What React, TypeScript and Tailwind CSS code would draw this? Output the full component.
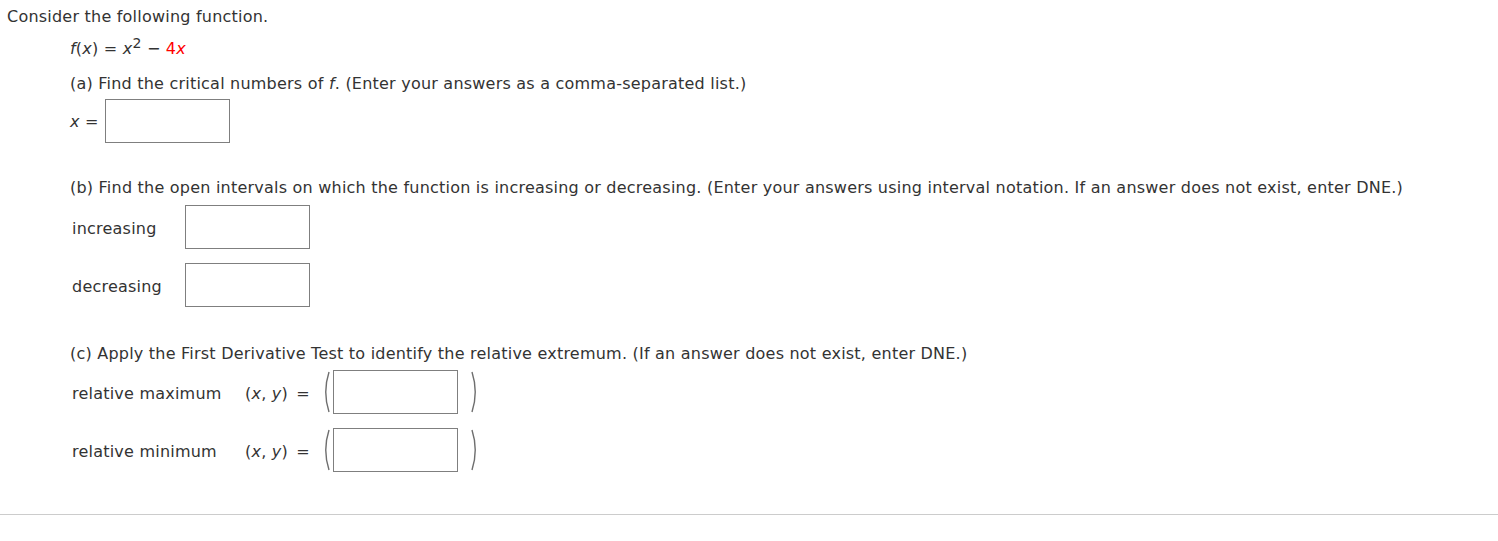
import React from "react";

const Box = ({ w = "w-[125px]" }: { w?: string }) => (
  <div className={`${w} h-[44px] border border-[#7f7f7f] bg-white shrink-0`} />
);

const Paren = ({ right = false }: { right?: boolean }) => (
  <svg width="10" height="44" viewBox="0 0 10 44" className="shrink-0">
    <path
      d={right ? "M2 2 Q8.5 22 2 42" : "M8 2 Q1.5 22 8 42"}
      fill="none"
      stroke="#6e6e6e"
      strokeWidth="1.4"
    />
  </svg>
);

export default function App() {
  return (
    <div
      className="w-[1498px] h-[541px] bg-white text-[#333333] text-[16px] tracking-[0.22px]"
      style={{ fontFamily: '"DejaVu Sans", Verdana, sans-serif' }}
    >
      <div className="pt-[7px]">
        <div className="pl-[7px] h-[20px] leading-[20px]">Consider the following function.</div>
        <div className="ml-[70px]">
          <div className="mt-[12px] h-[20px] leading-[20px]">
            <i>f</i>(<i>x</i>) = <i>x</i>
            <sup className="text-[14px] top-[-0.4em]">2</sup> − <span className="text-[#ff0000]">4<i>x</i></span>
          </div>
          <div className="mt-[15px] h-[20px] leading-[20px]">
            (a) Find the critical numbers of <i>f</i>. (Enter your answers as a comma-separated list.)
          </div>
          <div className="mt-[5px] flex items-center">
            <span className="w-[35px] pt-[2px]">
              <i>x</i> =
            </span>
            <Box />
          </div>
          <div className="mt-[35px] h-[20px] leading-[20px]">
            (b) Find the open intervals on which the function is increasing or decreasing. (Enter your answers using interval notation. If an answer does not exist, enter DNE.)
          </div>
          <div className="mt-[7px] flex items-center">
            <span className="pl-[2px] w-[115px] pt-[3px]">increasing</span>
            <Box />
          </div>
          <div className="mt-[14px] flex items-center">
            <span className="pl-[2px] w-[115px] pt-[3px]">decreasing</span>
            <Box />
          </div>
          <div className="mt-[37px] h-[20px] leading-[20px]">
            (c) Apply the First Derivative Test to identify the relative extremum. (If an answer does not exist, enter DNE.)
          </div>
          <div className="mt-[6px] flex items-center">
            <span className="pl-[2px] w-[175px] pt-[3px]">relative maximum</span>
            <span className="w-[76px] pt-[3px]">
              (<i>x</i>, <i>y</i>) <span className="pl-[3px]">=</span>
            </span>
            <Paren />
            <span className="w-[2px]" />
            <Box />
            <span className="w-[12px]" />
            <Paren right />
          </div>
          <div className="mt-[14px] flex items-center">
            <span className="pl-[2px] w-[175px] pt-[3px]">relative minimum</span>
            <span className="w-[76px] pt-[3px]">
              (<i>x</i>, <i>y</i>) <span className="pl-[3px]">=</span>
            </span>
            <Paren />
            <span className="w-[2px]" />
            <Box />
            <span className="w-[12px]" />
            <Paren right />
          </div>
        </div>
        <div className="mt-[42px] h-px bg-[#cccccc]" />
      </div>
    </div>
  );
}
